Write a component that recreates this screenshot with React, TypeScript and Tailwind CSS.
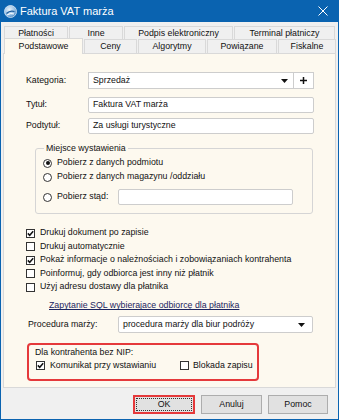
import React from "react";

const F = "font-['Liberation_Sans',Arial,sans-serif]";

function CheckBox({ checked }: { checked?: boolean }) {
  return (
    <span className="w-[9px] h-[9px] border border-[#333] bg-white flex items-center justify-center shrink-0">
      {checked && (
        <svg width="7" height="7" viewBox="0 0 7 7">
          <path d="M0.8 3.4 L2.7 5.3 L6.2 1.3" stroke="#111" strokeWidth="1.5" fill="none" />
        </svg>
      )}
    </span>
  );
}

function Radio({ checked }: { checked?: boolean }) {
  return (
    <span className="w-[9px] h-[9px] rounded-full border border-[#333] bg-white flex items-center justify-center shrink-0">
      {checked && <span className="w-[4px] h-[4px] rounded-full bg-[#111]" />}
    </span>
  );
}

function Arrow() {
  return (
    <svg width="7" height="4" viewBox="0 0 7 4">
      <path d="M0 0 L7 0 L3.5 4 Z" fill="#111" />
    </svg>
  );
}

function Tab({ label, w, active }: { label: string; w: string; active?: boolean }) {
  if (active) {
    return (
      <div
        className={`${w} relative z-10 -mt-[1px] h-[16px] bg-[#fdf9ef] border-x border-t border-[#d9d9d9] flex items-center justify-center text-[8.8px] text-[#111] shrink-0`}
      >
        {label}
      </div>
    );
  }
  return (
    <div
      className={`${w} h-[14px] bg-[#f0f0f0] border-x border-t border-[#d9d9d9] flex items-center justify-center text-[8.8px] text-[#111] shrink-0`}
    >
      {label}
    </div>
  );
}

function Input({ w, value }: { w: string; value?: string }) {
  return (
    <div className={`${w} h-[16px] bg-white border border-[#cdcdcd] rounded-[2px] flex items-center pl-[4px] text-[#111] shrink-0`}>
      {value}
    </div>
  );
}

export default function App() {
  return (
    <div className={`${F} w-[339px] h-[420px] bg-[#f0f0f0] border-x border-b border-[#0a63b0] flex flex-col overflow-hidden`}>
      {/* Title bar */}
      <div className="h-[22px] bg-[#0a63b0] flex items-center shrink-0">
        <div className="ml-[3px] w-[13px] h-[13px] shrink-0">
          <svg width="13" height="13" viewBox="0 0 13 13">
            <defs>
              <radialGradient id="lg" cx="0.4" cy="0.35" r="0.7">
                <stop offset="0" stopColor="#e8f2fb" />
                <stop offset="0.6" stopColor="#9cc3e6" />
                <stop offset="1" stopColor="#3d7fbf" />
              </radialGradient>
            </defs>
            <circle cx="6.5" cy="6.5" r="6" fill="url(#lg)" stroke="#dfeaf5" strokeWidth="0.8" />
            <path d="M2.5 8.5 Q6 5 10.5 6.5" stroke="#1d5c9c" strokeWidth="1.3" fill="none" />
            <path d="M3 10 Q6.5 7.5 10 9" stroke="#ffffff" strokeWidth="1" fill="none" />
          </svg>
        </div>
        <span className="ml-[3px] text-white text-[11px]">Faktura VAT marża</span>
        <div className="ml-auto mr-[10px] w-[10px] h-[10px]">
          <svg width="10" height="10" viewBox="0 0 10 10">
            <path d="M0.5 0.5 L9.5 9.5 M9.5 0.5 L0.5 9.5" stroke="#fff" strokeWidth="1" />
          </svg>
        </div>
      </div>

      {/* Tabs */}
      <div className="mt-[4px] ml-[3px] flex gap-[1px] h-[13px] items-start">
        <Tab label="Płatności" w="w-[64px]" />
        <Tab label="Inne" w="w-[54px]" />
        <Tab label="Podpis elektroniczny" w="w-[109px]" />
        <Tab label="Terminal płatniczy" w="w-[101px]" />
      </div>
      <div className="ml-[3px] flex gap-[1px] h-[14px] items-start">
        <Tab label="Podstawowe" w="w-[79px]" active />
        <Tab label="Ceny" w="w-[53px]" />
        <Tab label="Algorytmy" w="w-[68px]" />
        <Tab label="Powiązane" w="w-[70px]" />
        <Tab label="Fiskalne" w="w-[58px]" />
      </div>

      {/* Panel */}
      <div className="ml-[2px] w-[333px] h-[335px] bg-[#fdf9ef] border border-[#d9d9d9] flex flex-col text-[8.8px] text-[#111] shrink-0">
        {/* Kategoria */}
        <div className="mt-[18px] pl-[22px] h-[17px] flex items-center">
          <span className="w-[62px]">Kategoria:</span>
          <div className="w-[206px] h-[17px] bg-white border border-[#cdcdcd] flex items-center pl-[4px] pr-[5px]">
            <span>Sprzedaż</span>
            <span className="ml-auto flex items-center"><Arrow /></span>
          </div>
          <div className="w-[20px] h-[17px] bg-white border border-l-0 border-[#cdcdcd] flex items-center justify-center">
            <svg width="7" height="7" viewBox="0 0 7 7">
              <path d="M3.5 0 V7 M0 3.5 H7" stroke="#111" strokeWidth="1.5" />
            </svg>
          </div>
        </div>
        {/* Tytuł */}
        <div className="mt-[8px] pl-[22px] h-[16px] flex items-center">
          <span className="w-[62px]">Tytuł:</span>
          <Input w="w-[226px]" value="Faktura VAT marża" />
        </div>
        {/* Podtytuł */}
        <div className="mt-[5px] pl-[22px] h-[16px] flex items-center">
          <span className="w-[62px]">Podtytuł:</span>
          <Input w="w-[226px]" value="Za usługi turystyczne" />
        </div>

        {/* Group box */}
        <div className="relative mt-[14px] ml-[31px] w-[278px] border border-[#d5d5d5] rounded-[3px] pt-[7px] pb-[8px] pl-[7px] flex flex-col">
          <span className="absolute -top-[6px] left-[8px] px-[2px] bg-[#fdf9ef] leading-[11px]">Miejsce wystawienia</span>
          <div className="h-[14px] flex items-center gap-[5px]">
            <Radio checked />
            <span>Pobierz z danych podmiotu</span>
          </div>
          <div className="h-[14px] flex items-center gap-[5px]">
            <Radio />
            <span>Pobierz z danych magazynu /oddziału</span>
          </div>
          <div className="mt-[5px] h-[16px] flex items-center">
            <Radio />
            <span className="ml-[5px] w-[61px]">Pobierz stąd:</span>
            <Input w="w-[175px]" />
          </div>
        </div>

        {/* Checkboxes */}
        <div className="mt-[12px] pl-[22px] flex flex-col">
          <div className="h-[14px] flex items-center gap-[5px]"><CheckBox checked /><span>Drukuj dokument po zapisie</span></div>
          <div className="h-[13px] flex items-center gap-[5px]"><CheckBox /><span>Drukuj automatycznie</span></div>
          <div className="h-[14px] flex items-center gap-[5px]"><CheckBox checked /><span>Pokaż informacje o należnościach i zobowiązaniach kontrahenta</span></div>
          <div className="h-[13px] flex items-center gap-[5px]"><CheckBox /><span>Poinformuj, gdy odbiorca jest inny niż płatnik</span></div>
          <div className="h-[14px] flex items-center gap-[5px]"><CheckBox /><span>Użyj adresu dostawy dla płatnika</span></div>
        </div>

        {/* Link */}
        <div className="mt-[5px] h-[14px] pl-[45px] flex items-center">
          <span className="underline text-[#1c2560]">Zapytanie SQL wybierajace odbiorcę dla płatnika</span>
        </div>

        {/* Procedura */}
        <div className="mt-[3px] h-[17px] pl-[24px] flex items-center">
          <span className="w-[90px]">Procedura marży:</span>
          <div className="w-[195px] h-[17px] bg-white border border-[#cdcdcd] rounded-[2px] flex items-center pl-[4px] pr-[7px]">
            <span>procedura marży dla biur podróży</span>
            <span className="ml-auto flex items-center"><Arrow /></span>
          </div>
        </div>

        {/* Red box */}
        <div className="mt-[10px] ml-[23px] w-[232px] h-[38px] border-2 border-[#e5393b] rounded-[4px] pl-[6px] pt-[1px] flex flex-col">
          <div className="h-[13px] flex items-center">Dla kontrahenta bez NIP:</div>
          <div className="h-[13px] flex items-center">
            <div className="w-[145px] flex items-center gap-[5px] pl-[1px]">
              <CheckBox checked />
              <span>Komunikat przy wstawianiu</span>
            </div>
            <CheckBox />
            <span className="ml-[4px]">Blokada zapisu</span>
          </div>
        </div>
      </div>

      {/* Buttons */}
      <div className="mt-[7px] ml-[132px] flex gap-[6px] h-[19px] text-[8.8px] text-[#111]">
        <div className="w-[62px] h-[19px] border-2 border-[#e5393b] bg-[#e1e1e1] p-[1px]">
          <div className="w-full h-full border border-dotted border-[#333] flex items-center justify-center">OK</div>
        </div>
        <div className="w-[61px] h-[19px] border border-[#adadad] bg-[#e1e1e1] flex items-center justify-center">Anuluj</div>
        <div className="w-[60px] h-[19px] border border-[#adadad] bg-[#e1e1e1] flex items-center justify-center">Pomoc</div>
      </div>
    </div>
  );
}
